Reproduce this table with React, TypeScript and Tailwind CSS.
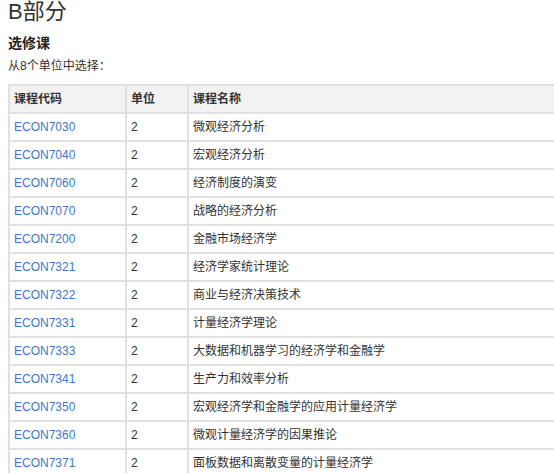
const courses = [
  ["ECON7030", "微观经济分析"],
  ["ECON7040", "宏观经济分析"],
  ["ECON7060", "经济制度的演变"],
  ["ECON7070", "战略的经济分析"],
  ["ECON7200", "金融市场经济学"],
  ["ECON7321", "经济学家统计理论"],
  ["ECON7322", "商业与经济决策技术"],
  ["ECON7331", "计量经济学理论"],
  ["ECON7333", "大数据和机器学习的经济学和金融学"],
  ["ECON7341", "生产力和效率分析"],
  ["ECON7350", "宏观经济学和金融学的应用计量经济学"],
  ["ECON7360", "微观计量经济学的因果推论"],
  ["ECON7371", "面板数据和离散变量的计量经济学"],
];

export default function App() {
  return (
    <div className="h-[473px] w-[554px] overflow-hidden bg-white px-2 font-['Liberation_Sans','Noto_Sans_CJK_SC',sans-serif] text-[#333]">
      <h2 className="text-[22px] leading-[24px] text-[#333]">B部分</h2>
      <h3 className="mt-[10px] text-[14px] font-bold leading-[18px] text-[#222]">选修课</h3>
      <p className="mt-[6px] text-[12px] leading-[16px]">从8个单位中选择：</p>
      <table className="mt-[10px] w-[620px] border-collapse text-[12px]">
        <thead>
          <tr className="h-[28px] bg-[#f2f2f2]">
            <th className="w-[117px] border-2 border-[#e0e0e0] px-[4px] text-left font-bold">课程代码</th>
            <th className="w-[62px] border-2 border-[#e0e0e0] px-[4px] text-left font-bold">单位</th>
            <th className="border-2 border-[#e0e0e0] px-[4px] text-left font-bold">课程名称</th>
          </tr>
        </thead>
        <tbody>
          {courses.map(([code, name]) => (
            <tr key={code} className="h-[28px]">
              <td className="border-2 border-[#e0e0e0] px-[4px] text-[#3b78cc]">{code}</td>
              <td className="border-2 border-[#e0e0e0] px-[4px]">2</td>
              <td className="border-2 border-[#e0e0e0] px-[4px]">{name}</td>
            </tr>
          ))}
        </tbody>
      </table>
    </div>
  );
}
